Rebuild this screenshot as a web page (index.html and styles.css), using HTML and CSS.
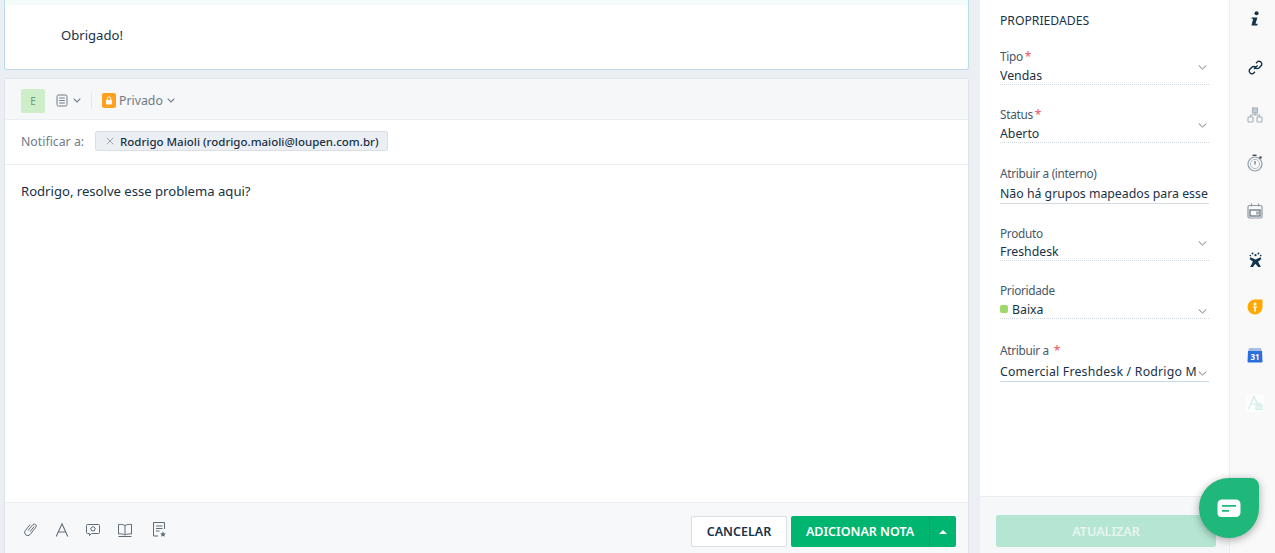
FILE: index.html
```html
<!DOCTYPE html>
<html lang="pt">
<head>
<meta charset="utf-8">
<title>Nota</title>
<link rel="stylesheet" href="styles.css">
</head>
<body>
<div class="app">
  <main class="main">
    <section class="msg">
      <div class="msg-band"></div>
      <p class="msg-text">Obrigado!</p>
    </section>
    <section class="composer">
      <div class="c-head">
        <span class="avatar">E</span>
        <svg class="ic-note" width="12" height="13" viewBox="0 0 12 13" fill="none" stroke="#6f7c87" stroke-width="1"><rect x="1" y="1" width="10" height="11" rx="1.5"/><path d="M3.2 4h5.6M3.2 6.5h5.6M3.2 9h5.6"/></svg>
        <svg class="chev" width="8" height="5" viewBox="0 0 8 5" fill="none" stroke="#6f7c87" stroke-width="1.1"><path d="M.7.7 4 4 7.3.7"/></svg>
        <span class="c-sep"></span>
        <span class="lock"><svg width="8" height="9" viewBox="0 0 8 9"><path d="M1 4h6v4.400H1z" fill="#fff"/><path d="M2.300 4V2.600a1.700 1.700 0 0 1 3.400 0V4" fill="none" stroke="#fff" stroke-width="1"/></svg></span>
        <span class="priv">Privado</span>
        <svg class="chev" width="8" height="5" viewBox="0 0 8 5" fill="none" stroke="#6f7c87" stroke-width="1.1"><path d="M.7.7 4 4 7.3.7"/></svg>
      </div>
      <div class="c-notify">
        <span class="n-label">Notificar a:</span>
        <span class="tag"><svg width="8" height="8" viewBox="0 0 8 8" stroke="#9aa5ae" stroke-width="1"><path d="M.7.7l6.600 6.600M7.300.7.7 7.300"/></svg><b>Rodrigo Maioli (rodrigo.maioli@loupen.com.br)</b></span>
      </div>
      <div class="c-body">Rodrigo, resolve esse problema aqui?</div>
      <div class="c-foot">
        <div class="tools">
          <svg width="16" height="16" viewBox="0 0 16 16" fill="none" stroke="#5f6d78" stroke-width="1"><path d="M5 8.500 9.800 2.700a2 2 0 0 1 3.100 2.500L7 12.600a3.100 3.100 0 0 1-4.800-3.900l5-6.200M7 9.700l4.300-5.300"/></svg>
          <svg width="14" height="16" viewBox="0 0 14 16" fill="none" stroke="#5f6d78" stroke-width="1.1"><path d="M1.200 14.500 7 1.800l5.800 12.700M3.200 10h7.600"/></svg>
          <svg width="16" height="16" viewBox="0 0 16 16" fill="none" stroke="#5f6d78" stroke-width="1"><path d="M2.500 2.500h11a1 1 0 0 1 1 1v7a1 1 0 0 1-1 1H6.500l-2 2v-2h-2a1 1 0 0 1-1-1v-7a1 1 0 0 1 1-1z"/><path d="m8 4.500 2.300 1.700-.9 2.600H6.600l-.9-2.600z"/></svg>
          <svg width="16" height="16" viewBox="0 0 16 16" fill="none" stroke="#5f6d78" stroke-width="1"><path d="M8 3.500C6.500 2.500 3.500 2.200 1.500 2.500v9.500c2-.3 5 0 6.500 1 1.500-1 4.500-1.300 6.500-1V2.500C12.500 2.200 9.500 2.500 8 3.500zM8 3.500V13M1.500 14.500h13"/></svg>
          <svg class="tool-last" width="15" height="17" viewBox="0 0 15 17" fill="none" stroke="#5f6d78" stroke-width="1"><path d="M6 15H1.500V1.500h11V8M4 5h6.500M4 7.500h6.500M4 10h3.500"/><path d="m11 10.500.9 1.800 1.900.2-1.400 1.300.4 1.900-1.800-1-1.800 1 .4-1.900-1.400-1.300 1.900-.2z" fill="#5f6d78" stroke="none"/></svg>
        </div>
        <div class="actions">
          <button class="btn-cancel">CANCELAR</button>
          <div class="btn-add">
            <span class="add-main">ADICIONAR NOTA</span>
            <span class="add-caret"><svg width="8" height="4" viewBox="0 0 8 4"><path d="M4 0l4 4H0z" fill="#fff"/></svg></span>
          </div>
        </div>
      </div>
    </section>
  </main>

  <aside class="props">
    <div class="props-scroll">
      <h2 class="props-title">PROPRIEDADES</h2>

      <div class="field f-tipo">
        <label class="f-label">Tipo<i class="req">*</i></label>
        <div class="f-val dotted"><span>Vendas</span><svg class="f-chev up" width="9" height="5" viewBox="0 0 9 5" fill="none" stroke="#6f7c87"><path d="M.7.5 4.500 4 8.300.5"/></svg></div>
      </div>
      <div class="field f-status">
        <label class="f-label">Status<i class="req">*</i></label>
        <div class="f-val dotted"><span>Aberto</span><svg class="f-chev up" width="9" height="5" viewBox="0 0 9 5" fill="none" stroke="#6f7c87"><path d="M.7.5 4.500 4 8.300.5"/></svg></div>
      </div>
      <div class="field f-int">
        <label class="f-label">Atribuir a (interno)</label>
        <div class="f-val solid"><span>Não há grupos mapeados para esse</span></div>
      </div>
      <div class="field f-prod">
        <label class="f-label">Produto</label>
        <div class="f-val dotted"><span>Freshdesk</span><svg class="f-chev up" width="9" height="5" viewBox="0 0 9 5" fill="none" stroke="#6f7c87"><path d="M.7.5 4.500 4 8.300.5"/></svg></div>
      </div>
      <div class="field f-pri">
        <label class="f-label">Prioridade</label>
        <div class="f-val dotted"><span class="dot"></span><span>Baixa</span><svg class="f-chev down" width="9" height="5" viewBox="0 0 9 5" fill="none" stroke="#6f7c87"><path d="M.7.5 4.500 4 8.300.5"/></svg></div>
      </div>
      <div class="field f-attr">
        <label class="f-label">Atribuir a <i class="req sp">*</i></label>
        <div class="f-val blue"><span class="attr-name">Comercial Freshdesk / Rodrigo M</span><svg class="f-chev down" width="9" height="5" viewBox="0 0 9 5" fill="none" stroke="#6f7c87"><path d="M.7.5 4.500 4 8.300.5"/></svg></div>
      </div>
    </div>
    <div class="props-foot"><button class="btn-update">ATUALIZAR</button></div>
  </aside>

  <nav class="rail">
    <span class="rail-i"><svg width="11" height="16" viewBox="0 0 10 15"><circle cx="6" cy="2.200" r="1.900" fill="#12344d"/><path d="M1.500 6h5.300L5 12h2l-.3 1.500H1.200L2.800 7.300H1.200z" fill="#12344d"/></svg></span>
    <span class="rail-i"><svg width="17" height="17" viewBox="0 0 16 16" fill="none" stroke="#12344d" stroke-width="1.300"><path d="M6.500 9.500 10 6M8.500 4 10.300 2.200a2.800 2.800 0 0 1 3.500 3.500L11.500 8.200a2.600 2.600 0 0 1-3.700 0M7.500 12 5.700 13.800a2.800 2.800 0 0 1-3.500-3.500L4.500 7.800a2.600 2.600 0 0 1 3.700 0"/></svg></span>
    <span class="rail-i"><svg width="16" height="16" viewBox="0 0 16 16" fill="none" stroke="#a5b0b9" stroke-width="1.100"><rect x="5.500" y="1" width="5" height="5" fill="#c6ced4"/><rect x="1" y="10" width="5" height="5" rx=".8"/><rect x="10" y="10" width="5" height="5" rx=".8"/><path d="M8 6v2M3.500 10V8h9v2"/></svg></span>
    <span class="rail-i"><svg width="16" height="18" viewBox="0 0 16 18" fill="none" stroke="#8f9ba5"><circle cx="8" cy="10" r="7" stroke-width="1.200"/><circle cx="8" cy="10" r="4.600" stroke="#b4bdc4"/><path d="M8 7v3.500" stroke="#5f6d78" stroke-width="1.200"/><path d="M5.500 1.300h4" stroke="#3d4c58" stroke-width="1.400"/><circle cx="13.500" cy="3.500" r="1.200" fill="#3d4c58" stroke="none"/></svg></span>
    <span class="rail-i"><svg width="16" height="16" viewBox="0 0 16 16" fill="none" stroke="#8c98a2" stroke-width="1.200"><rect x="1" y="2.500" width="14" height="12.500" rx="1.500"/><path d="M4.500 .5v3M11.500 .5v3"/><rect x="3" y="7" width="10" height="6" stroke="#5f6d78"/><rect x="9" y="8.500" width="3" height="3" fill="#a5b0b9" stroke="none"/></svg></span>
    <span class="rail-i"><svg width="13" height="17" viewBox="0 0 14 17"><circle cx="7" cy="3.800" r="1.200" fill="#12344d"/><circle cx="3.800" cy="2" r="1" fill="#12344d"/><circle cx="10.200" cy="2" r="1" fill="#12344d"/><circle cx="1.400" cy="4.200" r=".9" fill="#12344d"/><circle cx="12.600" cy="4.200" r=".9" fill="#12344d"/><path d="M1.500 6 7 8.500 12.500 6l.8 2-3.500 2.800 3 5.700h-3L7 13l-2.800 3.500h-3l3-5.700L.7 8z" fill="#12344d"/></svg></span>
    <span class="rail-i"><svg width="16" height="16" viewBox="0 0 16 16"><path d="M8 .5c3 0 7.500-.5 7.500.5v7A7.500 7.500 0 0 1 .5 8 7.500 7.500 0 0 1 8 .5z" fill="#ffa800"/><circle cx="8" cy="5" r="1.500" fill="#fff"/><path d="M5.200 7.500h5.600L8.800 9v3.500H7.200V9z" fill="#fff"/></svg></span>
    <span class="rail-i"><svg width="16" height="16" viewBox="0 0 16 16"><path d="M2 1h12l1 4H1z" fill="#a7bde6"/><path d="M1 4h14l.5 10.500a1 1 0 0 1-1 1h-13a1 1 0 0 1-1-1z" fill="#2a6fdb"/><text x="8" y="13" class="cal-num">31</text></svg></span>
    <span class="rail-i"><svg width="18" height="18" viewBox="0 0 18 18" fill="none" stroke="#d3ede8" stroke-width="1.200"><rect width="18" height="18" fill="#fcfdfd" stroke="none"/><path d="M2.500 15 8 2.500 12 11M5 10h6"/><path d="M10 11h6v4.500h-6zM12 8.500v7M14 8.500v7"/></svg></span>
  </nav>

  <button class="chat" aria-label="Chat"><svg width="24" height="19" viewBox="0 0 24 19"><path d="M5 .5h14A4.500 4.500 0 0 1 23.500 5v8.500A4.500 4.500 0 0 1 19 18H4.500A4 4 0 0 1 .5 14V5A4.500 4.500 0 0 1 5 .5z" fill="#fff"/><path d="M5 6h14v1.800H5zM5 11h7v1.800H5z" fill="#1fb77a"/></svg></button>
</div>
</body>
</html>
```

FILE: styles.css
```css
* { box-sizing: border-box; }
html, body { margin: 0; height: 100%; overflow: hidden; }
body {
  background: #ebeff3;
  font-family: "Noto Sans", "Open Sans", sans-serif;
  font-size: 13px;
  color: #183247;
}
.app { position: relative; display: flex; height: 553px; }

/* main column */
.main {
  width: 980px;
  padding-left: 4px;
  padding-right: 11px;
  display: flex;
  flex-direction: column;
  gap: 8px;
}
.msg {
  height: 70px;
  background: #fff;
  border: 1px solid #bcdce8;
  border-top: 0;
  border-radius: 0 0 3px 3px;
}
.msg-band { height: 5px; background: #f3fbfb; }
.msg-text {
  margin: 20px 0 0 56px;
  font-size: 13.100px;
  line-height: 20px;
}
.composer {
  flex: 1;
  display: flex;
  flex-direction: column;
  background: #fff;
  border: 1px solid #dfe4e9;
  border-bottom: 0;
  border-radius: 3px 3px 0 0;
}
.c-head {
  height: 41px;
  flex: none;
  display: flex;
  align-items: center;
  padding: 3px 0 0 16px;
  background: #f5f7f9;
  border-bottom: 1px solid #ebeff3;
}
.avatar {
  width: 24px;
  height: 24px;
  display: flex;
  align-items: center;
  justify-content: center;
  background: #cdeec9;
  border-radius: 2px;
  color: #6f9b76;
  font-size: 10px;
  margin-right: 11px;
}
.ic-note { margin-right: 5px; }
.c-sep { width: 1px; height: 16px; background: #e4e8ec; margin: 0 10px; }
.lock {
  width: 14px;
  height: 15px;
  background: #ffa01e;
  border-radius: 2px;
  display: flex;
  align-items: center;
  justify-content: center;
  margin-right: 3px;
}
.priv { color: #6f7c87; font-size: 12.300px; margin-right: 4px; }
.c-notify {
  height: 45px;
  flex: none;
  display: flex;
  align-items: center;
  padding: 0 0 2px 16px;
  border-bottom: 1px solid #ebeff3;
}
.n-label { color: #6f7c87; font-size: 12.300px; width: 74px; }
.tag {
  height: 20px;
  display: flex;
  align-items: center;
  gap: 6px;
  padding: 0 9px 0 10px;
  background: #ebeff3;
  border: 1px solid #dadfe3;
  border-radius: 2px;
  font-size: 11.500px;
}
.tag b { font-weight: 500; }
.c-body {
  flex: 1;
  padding: 16px;
  font-size: 13.100px;
  line-height: 20px;
}
.c-foot {
  height: 51px;
  flex: none;
  display: flex;
  align-items: center;
  justify-content: space-between;
  padding: 7px 12px 0 18px;
  background: #f7f8f9;
  border-top: 1px solid #ebeff3;
}
.tools { display: flex; align-items: center; gap: 16px; margin-bottom: 4px; }
.tools svg { display: block; }
.tool-last { margin-left: 3px; }
.actions { display: flex; align-items: center; gap: 4px; }
.btn-cancel {
  width: 96px;
  height: 31px;
  background: #fff;
  border: 1px solid #dadfe3;
  border-radius: 2px;
  color: #183247;
  font: 600 12.500px "Noto Sans", sans-serif;
}
.btn-add {
  height: 31px;
  display: flex;
  color: #fff;
  font-weight: 600;
  font-size: 12.500px;
  background: #00b56f;
  border-radius: 2px;
}
.add-main { width: 138px; display: flex; align-items: center; justify-content: center; }
.add-caret {
  width: 27px;
  display: flex;
  align-items: center;
  justify-content: center;
  border-left: 1px solid #06a467;
}

/* properties */
.props {
  width: 250px;
  background: #fff;
  border-right: 1px solid #ebeff3;
  display: flex;
  flex-direction: column;
}
.props-scroll { flex: 1; padding: 13px 20px 0; }
.props-title {
  margin: 0;
  font-size: 12.200px;
  font-weight: 400;
  line-height: 16px;
}
.field { position: relative; }
.f-tipo { margin-top: 19px; }
.f-status { margin-top: 21px; }
.f-int { margin-top: 22px; }
.f-prod { margin-top: 21px; }
.f-pri { margin-top: 21px; }
.f-attr { margin-top: 23px; }
.f-label {
  display: block;
  font-size: 11.800px;
  line-height: 16px;
  letter-spacing: -.3px;
  color: #475867;
}
.req { color: #ee5260; font-style: normal; margin-left: 2px; font-size: 12px; line-height: 0; }
.req.sp { margin-left: 2px; }
.f-val {
  display: flex;
  align-items: center;
  height: 19px;
  margin-top: 2px;
  font-size: 12.300px;
  font-weight: 400;
  width: 209px;
  white-space: nowrap;
}
.dotted { border-bottom: 1px dotted #cfd7df; }
.f-prod .dotted { margin-top: 1px; }
.solid { border-bottom: 1px solid #d5dbe0; height: 21px; }
.blue { border-bottom: 1px solid #c5d6e4; height: 22px; padding-top: 2px; }
.attr-name { width: 196px; flex: none; letter-spacing: .2px; }
.f-chev { margin-left: auto; margin-right: 2px; flex: none; }
.f-chev.up { position: relative; top: -8px; }
.f-chev.down { position: relative; top: 2px; }
.dot {
  width: 8px;
  height: 8px;
  margin-right: 4px;
  background: #a0d76a;
  border-radius: 2px;
  flex: none;
}
.props-foot {
  height: 57px;
  flex: none;
  padding: 18px 13px 0 16px;
  background: #f5f7f9;
  border-top: 1px solid #ebeff3;
}
.btn-update {
  width: 220px;
  height: 32px;
  background: #b5e6d4;
  border: 0;
  border-radius: 2px;
  color: #e8f5ef;
  font: 600 12.500px "Noto Sans", sans-serif;
}

/* icon rail */
.rail {
  flex: 1;
  background: #f9f9f9;
  display: flex;
  flex-direction: column;
  align-items: center;
  padding: 11px 0 0 5px;
  gap: 32px;
}
.rail-i { height: 16px; display: flex; align-items: center; justify-content: center; }
.rail svg { display: block; flex: none; }
.cal-num { font: 700 8px "Noto Sans", sans-serif; fill: #fff; text-anchor: middle; }

/* chat launcher */
.chat {
  position: absolute;
  left: 1199px;
  top: 478px;
  width: 60px;
  height: 60px;
  padding: 0;
  border: 0;
  background: #1fb77a;
  border-radius: 30px 8px 30px 30px;
  box-shadow: 0 2px 8px rgba(0, 0, 0, .35);
  display: flex;
  align-items: center;
  justify-content: center;
}
```
